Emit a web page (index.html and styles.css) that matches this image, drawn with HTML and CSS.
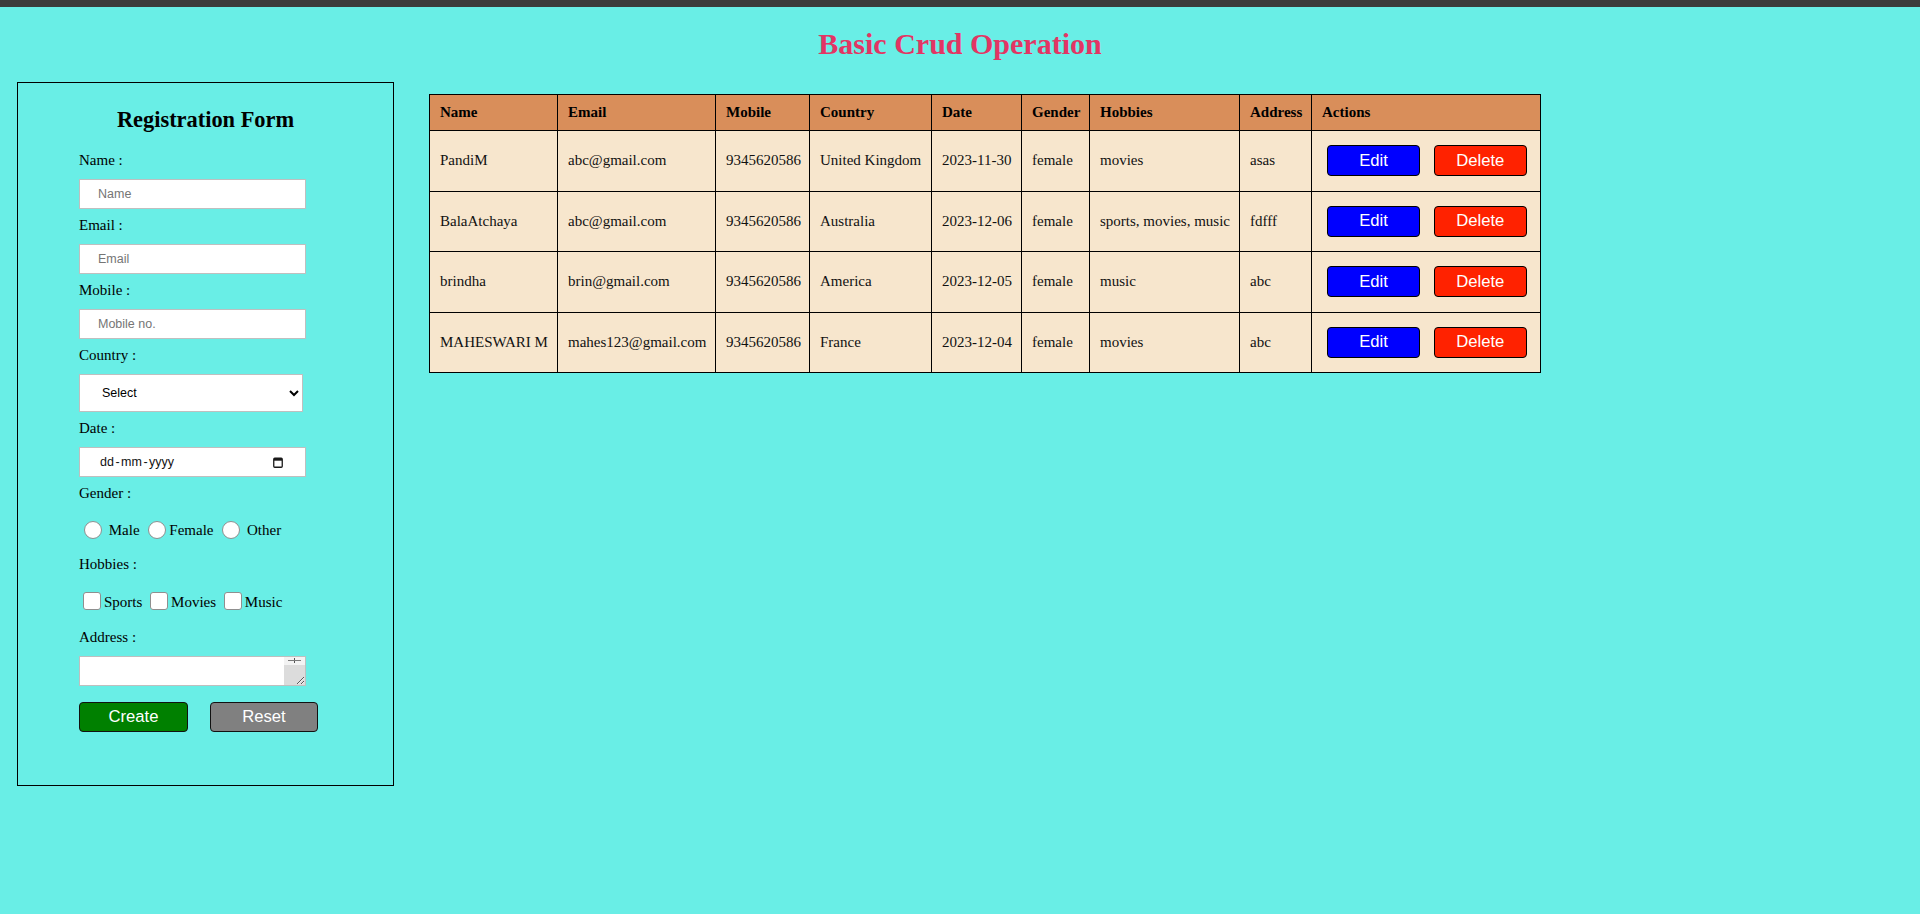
FILE: index.html
```html
<!DOCTYPE html>
<html lang="en">
<head>
<meta charset="utf-8">
<title>Basic Crud Operation</title>
<link rel="stylesheet" href="styles.css">
</head>
<body>
<div class="topbar"></div>
<h1 class="page-title">Basic Crud Operation</h1>
<div class="layout">
  <form class="reg-form">
    <h2 class="form-title">Registration Form</h2>
    <div class="fields">
      <label class="field-label first">Name :</label>
      <input class="text-input" type="text" placeholder="Name">
      <label class="field-label">Email :</label>
      <input class="text-input" type="text" placeholder="Email">
      <label class="field-label">Mobile :</label>
      <input class="text-input" type="text" placeholder="Mobile no.">
      <label class="field-label">Country :</label>
      <select class="select-input">
        <option>Select</option>
        <option>India</option>
        <option>America</option>
        <option>Australia</option>
        <option>France</option>
        <option>United Kingdom</option>
      </select>
      <label class="field-label">Date :</label>
      <div class="date-field">
        <span class="date-text">dd<span class="sep">-</span>mm<span class="sep">-</span>yyyy</span>
        <svg class="cal-icon" width="10" height="11" viewBox="0 0 10 11"><rect x="0.75" y="1.25" width="8.5" height="9" rx="1" fill="none" stroke="#1a1a1a" stroke-width="1.3"/><rect x="1" y="1.5" width="8" height="2.2" fill="#1a1a1a"/></svg>
      </div>
      <label class="field-label">Gender :</label>
      <div class="choice-row radios"><input class="radio" type="radio" name="g"> Male <input class="radio" type="radio" name="g">Female <input class="radio" type="radio" name="g"> Other</div>
      <label class="field-label after-row">Hobbies :</label>
      <div class="choice-row checks"><input class="check" type="checkbox">Sports <input class="check" type="checkbox">Movies <input class="check" type="checkbox">Music</div>
      <label class="field-label after-row2">Address :</label>
      <textarea class="addr"></textarea>
      <div class="form-actions">
        <button type="button" class="fbtn create">Create</button>
        <button type="button" class="fbtn reset">Reset</button>
      </div>
    </div>
  </form>
  <table class="data-table">
    <colgroup>
      <col class="c-name"><col class="c-email"><col class="c-mobile"><col class="c-country"><col class="c-date"><col class="c-gender"><col class="c-hobbies"><col class="c-address"><col class="c-actions">
    </colgroup>
    <thead>
      <tr><th>Name</th><th>Email</th><th>Mobile</th><th>Country</th><th>Date</th><th>Gender</th><th>Hobbies</th><th>Address</th><th>Actions</th></tr>
    </thead>
    <tbody>
      <tr><td>PandiM</td><td>abc@gmail.com</td><td>9345620586</td><td>United Kingdom</td><td>2023-11-30</td><td>female</td><td>movies</td><td>asas</td><td class="actions"><button type="button" class="btn edit">Edit</button> <button type="button" class="btn delete">Delete</button></td></tr>
      <tr><td>BalaAtchaya</td><td>abc@gmail.com</td><td>9345620586</td><td>Australia</td><td>2023-12-06</td><td>female</td><td>sports, movies, music</td><td>fdfff</td><td class="actions"><button type="button" class="btn edit">Edit</button> <button type="button" class="btn delete">Delete</button></td></tr>
      <tr><td>brindha</td><td>brin@gmail.com</td><td>9345620586</td><td>America</td><td>2023-12-05</td><td>female</td><td>music</td><td>abc</td><td class="actions"><button type="button" class="btn edit">Edit</button> <button type="button" class="btn delete">Delete</button></td></tr>
      <tr><td>MAHESWARI M</td><td>mahes123@gmail.com</td><td>9345620586</td><td>France</td><td>2023-12-04</td><td>female</td><td>movies</td><td>abc</td><td class="actions"><button type="button" class="btn edit">Edit</button> <button type="button" class="btn delete">Delete</button></td></tr>
    </tbody>
  </table>
</div>
</body>
</html>
```

FILE: styles.css
```css
* { box-sizing: border-box; }
html, body { margin: 0; padding: 0; }
body {
  background: #69eee6;
  font-family: "Liberation Serif", "Times New Roman", serif;
  color: #000;
  min-height: 914px;
}
.topbar { height: 7px; background: #3c3c3c; }
.page-title {
  margin: 20px 0 21px;
  font-size: 30px;
  line-height: 34px;
  font-weight: bold;
  text-align: center;
  color: #e23564;
}
.layout {
  display: flex;
  align-items: flex-start;
  padding-left: 17px;
  gap: 35px;
}

/* form */
.reg-form {
  width: 377px;
  flex: none;
  border: 1px solid #000;
  padding: 24px 0 53px;
}
.form-title {
  margin: 0;
  font-size: 22.4px;
  line-height: 26px;
  font-weight: bold;
  text-align: center;
}
.fields { padding-left: 61px; }
.field-label {
  display: block;
  font-size: 15px;
  line-height: 17px;
  margin-top: 8px;
}
.field-label.first { margin-top: 19px; }
.field-label.after-row { margin-top: 15px; }
.field-label.after-row2 { margin-top: 16px; }
.text-input {
  display: block;
  width: 227px;
  height: 30px;
  margin: 10px 0 0;
  padding: 0 18px;
  border: 1px solid #bfbfbf;
  border-radius: 0;
  background: #fff;
  font: 12.5px "Liberation Sans", Arial, sans-serif;
  color: #000;
  outline: none;
}
.text-input::placeholder { color: #757575; }
.select-input {
  display: block;
  width: 224px;
  height: 38px;
  margin: 10px 0 0;
  padding: 0 0 0 18px;
  border: 1px solid #bfbfbf;
  border-radius: 0;
  background-color: #fff;
  font: 12.5px "Liberation Sans", Arial, sans-serif;
  color: #000;
}
.date-field {
  display: flex;
  align-items: center;
  justify-content: space-between;
  width: 227px;
  height: 30px;
  margin-top: 10px;
  padding: 0 22px 0 20px;
  border: 1px solid #bfbfbf;
  background: #fff;
  font: 12.5px "Liberation Sans", Arial, sans-serif;
  color: #111;
}
.date-text .sep { padding: 0 1.5px; }
.cal-icon { display: block; }
.choice-row {
  height: 22px;
  line-height: 22px;
  font-size: 15px;
  white-space: nowrap;
}
.choice-row.radios { margin-top: 17px; }
.choice-row.checks { margin-top: 18px; }
.radio {
  appearance: none;
  -webkit-appearance: none;
  width: 18px;
  height: 18px;
  margin: 0 3px 0 5px;
  border: 1px solid #8f8f8f;
  border-radius: 50%;
  background: #fff;
  vertical-align: -4px;
}
.check {
  appearance: none;
  -webkit-appearance: none;
  width: 18px;
  height: 18px;
  margin: 0 3px 0 4px;
  border: 1px solid #8f8f8f;
  border-radius: 3px;
  background: #fff;
  vertical-align: -3px;
}
.addr {
  display: block;
  width: 227px;
  height: 30px;
  margin-top: 10px;
  padding: 2px 24px 2px 2px;
  border: 1px solid #bfbfbf;
  background:
    linear-gradient(#7a7a7a, #7a7a7a) right 4px top 3px / 13px 1px no-repeat,
    linear-gradient(#555, #555) right 10px top 1px / 1px 5px no-repeat,
    linear-gradient(#f3f3f3, #f3f3f3) right 0 top 0 / 21px 8px no-repeat,
    linear-gradient(#dcdcdc, #dcdcdc) right 0 top 0 / 21px 100% no-repeat,
    #fff;
  overflow: hidden;
  resize: both;
  outline: none;
}
.form-actions {
  display: flex;
  gap: 22px;
  margin-top: 16px;
}
.fbtn {
  height: 30px;
  padding: 0;
  border: 1px solid #111;
  border-radius: 4px;
  color: #fff;
  font: 16.67px "Liberation Sans", Arial, sans-serif;
}
.fbtn.create { width: 109px; background: #008000; }
.fbtn.reset { width: 108px; background: #808080; }

/* table */
.data-table {
  margin-top: 12px;
  width: 1111px;
  flex: none;
  border-collapse: collapse;
  table-layout: fixed;
  font-size: 15px;
}
.c-name { width: 128px; }
.c-email { width: 158px; }
.c-mobile { width: 94px; }
.c-country { width: 122px; }
.c-date { width: 90px; }
.c-gender { width: 68px; }
.c-hobbies { width: 150px; }
.c-address { width: 72px; }
.c-actions { width: 229px; }
.data-table th,
.data-table td {
  border: 1px solid #000;
  padding: 0 10px;
  text-align: left;
  white-space: nowrap;
  overflow: visible;
}
.data-table thead tr { height: 36px; }
.data-table th { background: #d98e5a; font-weight: bold; }
.data-table tbody tr { height: 60.5px; }
.data-table td { background: #f7e6cd; color: #111; }
.btn {
  display: inline-block;
  width: 93px;
  height: 31px;
  margin: 0 5px;
  padding: 0;
  border: 1px solid #000;
  border-radius: 4px;
  color: #fff;
  font: 16.67px "Liberation Sans", Arial, sans-serif;
  vertical-align: middle;
}
.btn.edit { background: #0000ff; }
.btn.delete { background: #ff2200; }
```
